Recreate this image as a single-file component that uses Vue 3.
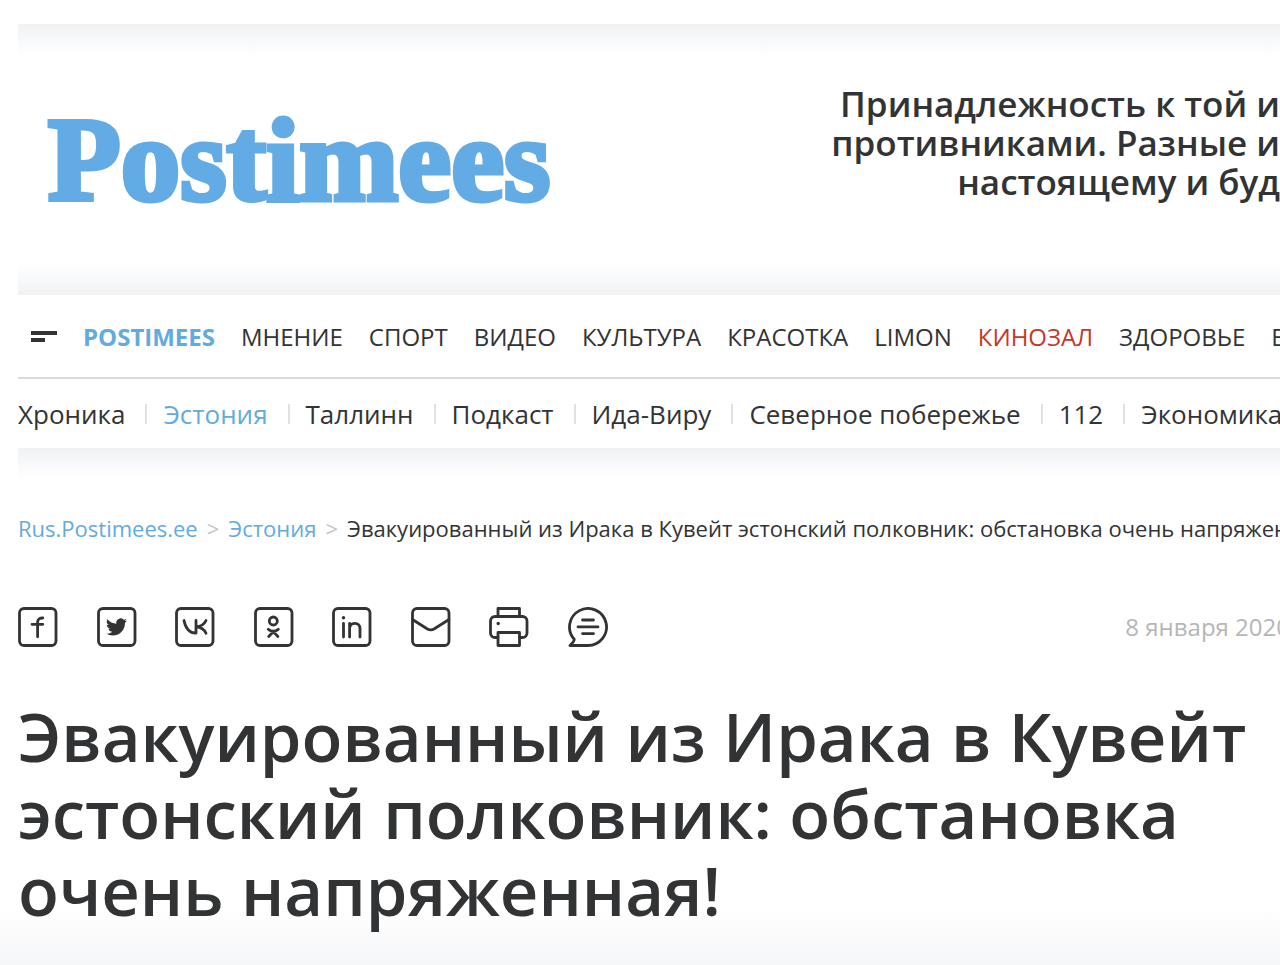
<script setup>
const sections = [
  { label: 'POSTIMEES', tone: 'brand' },
  { label: 'МНЕНИЕ' },
  { label: 'СПОРТ' },
  { label: 'ВИДЕО' },
  { label: 'КУЛЬТУРА' },
  { label: 'КРАСОТКА' },
  { label: 'LIMON' },
  { label: 'КИНОЗАЛ', tone: 'red' },
  { label: 'ЗДОРОВЬЕ' },
  { label: 'ЕЩЕ' },
]
const topics = [
  { label: 'Хроника' },
  { label: 'Эстония', active: true },
  { label: 'Таллинн' },
  { label: 'Подкаст' },
  { label: 'Ида-Виру' },
  { label: 'Северное побережье' },
  { label: '112' },
  { label: 'Экономика' },
]
</script>

<template>
  <div class="page">
    <header class="masthead">
      <a class="logo" href="#">Postimees</a>
      <a class="teaser" href="#">
        Принадлежность к той и<br />противниками. Разные и<br />настоящему и буд
      </a>
    </header>

    <nav class="sections" aria-label="Разделы">
      <button class="menu" type="button" aria-label="Меню">
        <span class="bar"></span>
        <span class="bar short"></span>
      </button>
      <a v-for="s in sections" :key="s.label" href="#" :class="s.tone">{{ s.label }}</a>
    </nav>

    <nav class="topics" aria-label="Темы">
      <a v-for="t in topics" :key="t.label" href="#" :class="{ active: t.active }">{{ t.label }}</a>
    </nav>

    <main>
      <nav class="crumbs" aria-label="Навигация">
        <a href="#">Rus.Postimees.ee</a>
        <span class="sep">&gt;</span>
        <a href="#">Эстония</a>
        <span class="sep">&gt;</span>
        <span>Эвакуированный из Ирака в Кувейт эстонский полковник: обстановка очень напряженная!</span>
      </nav>

      <div class="meta">
        <div class="share">
          <a href="#" aria-label="Facebook">
            <svg viewBox="0 0 40 40">
              <rect x="1.5" y="1.5" width="36.5" height="37" rx="4.5" />
              <path d="M24.800 11h-1a4.200 4.200 0 0 0-4.200 4.200V29.800M14 17.300h10.800" />
            </svg>
          </a>
          <a href="#" aria-label="Twitter">
            <svg viewBox="0 0 40 40">
              <rect x="1.5" y="1.5" width="36.5" height="37" rx="4.5" />
              <path class="solid" transform="translate(9 9.400) scale(.88)" d="M23.95 4.57a10 10 0 0 1-2.82.77 4.96 4.96 0 0 0 2.16-2.72c-.95.55-2 .96-3.13 1.18a4.92 4.92 0 0 0-8.38 4.48C7.69 8.1 4.07 6.13 1.64 3.16a4.92 4.92 0 0 0 1.52 6.57 4.9 4.9 0 0 1-2.23-.61v.06a4.92 4.92 0 0 0 3.95 4.83 5 5 0 0 1-2.21.08 4.94 4.94 0 0 0 4.6 3.42A9.87 9.87 0 0 1 0 19.54a13.99 13.99 0 0 0 7.56 2.21c9.05 0 14-7.5 14-13.98 0-.21 0-.42-.02-.63a9.94 9.94 0 0 0 2.46-2.55z" />
            </svg>
          </a>
          <a href="#" aria-label="VK">
            <svg viewBox="0 0 40 40">
              <rect x="1.5" y="1.5" width="36.5" height="37" rx="4.5" />
              <path d="M9 13.500c1.600 8 5.500 12.600 12 12.700V13.500M31 13.500c-1.500 3.400-4.500 6-10 6.300 5.500.4 8.500 3 10 6.400" />
            </svg>
          </a>
          <a href="#" aria-label="Одноклассники">
            <svg viewBox="0 0 40 40">
              <rect x="1.5" y="1.5" width="36.5" height="37" rx="4.5" />
              <circle cx="19.3" cy="14" r="4" />
              <path d="M14.3 22.3c3 2.3 7 2.3 10 0M19.3 24.8l-4.6 4.7M19.3 24.8l4.6 4.7" />
            </svg>
          </a>
          <a href="#" aria-label="LinkedIn">
            <svg viewBox="0 0 40 40">
              <rect x="1.5" y="1.5" width="36.5" height="37" rx="4.5" />
              <circle class="solid" cx="11.5" cy="10.7" r="1.7" />
              <path d="M11.5 16.5v13.5M17.6 16.5v13.5M17.6 21.5c0-3 2-5.2 5.2-5.2s5.2 2.200 5.200 5.200v8.500" />
            </svg>
          </a>
          <a href="#" aria-label="Почта">
            <svg viewBox="0 0 40 40">
              <rect x="1.5" y="1.5" width="36.5" height="37" rx="4.5" />
              <path d="M1.5 12.500l14.500 9.200q3.700 2.200 7.400 0l14.600-9.200" />
            </svg>
          </a>
          <button type="button" aria-label="Печать">
            <svg viewBox="0 0 40 40">
              <path d="M9 9.500v-8h21.500v8M9 30.500H6a4.500 4.500 0 0 1-4.500-4.500V14a4.500 4.500 0 0 1 4.500-4.500h27.500A4.500 4.500 0 0 1 38 14v12a4.500 4.500 0 0 1-4.500 4.500h-3" />
              <path d="M9 25.500h21.500v13H9z" />
              <circle class="solid" cx="9.2" cy="16.5" r="1.7" />
            </svg>
          </button>
          <a href="#" aria-label="Комментарии">
            <svg viewBox="0 0 40 40">
              <path d="M20 38.500a18.500 18.500 0 1 0-13.800-6.200c.4 1.800-.8 2.800-4.200 6.200z" />
              <path d="M14.500 13h11M10 19.800h20M14.500 26.600h11" />
            </svg>
          </a>
        </div>
        <time datetime="2020-01-08">8 января 2020</time>
      </div>

      <h1>Эвакуированный из Ирака в Кувейт эстонский полковник: обстановка очень напряженная!</h1>
    </main>
  </div>
</template>

<style>
body {
  margin: 0;
  background: #fff;
}
</style>

<style scoped>
.page {
  box-sizing: border-box;
  min-height: 100vh;
  padding: 24px 0 36px 18px;
  overflow: hidden;
  color: #323335;
  font-family: "Open Sans", "Noto Sans", sans-serif;
  background: linear-gradient(to top, #f6f7f9, #fff 60px);
}
a {
  color: inherit;
  text-decoration: none;
}
button {
  padding: 0;
  border: 0;
  color: inherit;
  background: none;
}
.masthead {
  display: flex;
  align-items: center;
  justify-content: space-between;
  box-sizing: border-box;
  height: 271px;
  padding-left: 30px;
  background: linear-gradient(to bottom, #f0f1f3, #f8f9fb 16px, #fff 32px, #fff calc(100% - 32px), #f8f9fb calc(100% - 16px), #f0f1f3);
}
.logo {
  color: #62abe4;
  font: bold 119px/144px "Liberation Serif", serif;
  -webkit-text-stroke: 5px #62abe4;
}
.teaser {
  padding-bottom: 34px;
  font-size: 35px;
  font-weight: 600;
  line-height: 39px;
  text-align: right;
  white-space: nowrap;
}
.sections {
  display: flex;
  align-items: center;
  gap: 26px;
  height: 82px;
  padding-left: 13px;
  border-bottom: 2px solid #dadbdd;
  background: #fff;
  font-size: 24px;
  white-space: nowrap;
}
.sections .brand {
  color: #62abe0;
  font-weight: 700;
}
.sections .red {
  color: #c53727;
}
.menu {
  display: flex;
  flex: none;
  flex-direction: column;
  gap: 3px;
  width: 26px;
}
.bar {
  height: 4px;
  background: #323335;
}
.short {
  width: 14px;
}
.topics {
  display: flex;
  align-items: center;
  height: 69px;
  font-size: 26px;
  white-space: nowrap;
}
.topics a {
  display: flex;
  align-items: center;
}
.topics a + a::before {
  width: 2px;
  height: 20px;
  margin: 0 16px 0 20px;
  background: #e0e1e3;
  content: "";
}
.topics .active {
  color: #62abe0;
}
main {
  padding-top: 64px;
  background: linear-gradient(to bottom, #f0f1f3, #f8f9fb 16px, rgba(255, 255, 255, 0) 32px);
}
.crumbs {
  display: flex;
  gap: 9px;
  font-size: 22px;
  line-height: 32px;
  white-space: nowrap;
}
.crumbs a {
  color: #62abe0;
}
.sep {
  color: #c4c5c7;
}
.meta {
  display: flex;
  align-items: center;
  justify-content: space-between;
  margin: 63px -10px 0 0;
}
.share {
  display: flex;
  justify-content: space-between;
  width: 590px;
}
.share svg {
  display: block;
  width: 40px;
  height: 40px;
  fill: none;
  stroke: currentColor;
  stroke-width: 2.8;
  stroke-linecap: round;
  stroke-linejoin: round;
}
.share .solid {
  fill: currentColor;
  stroke: none;
}
time {
  color: #b5b6b8;
  font-size: 24px;
  line-height: 40px;
  white-space: nowrap;
}
h1 {
  margin: 51px 0 0;
  font-size: 67px;
  font-weight: 600;
  line-height: 77px;
}
</style>
